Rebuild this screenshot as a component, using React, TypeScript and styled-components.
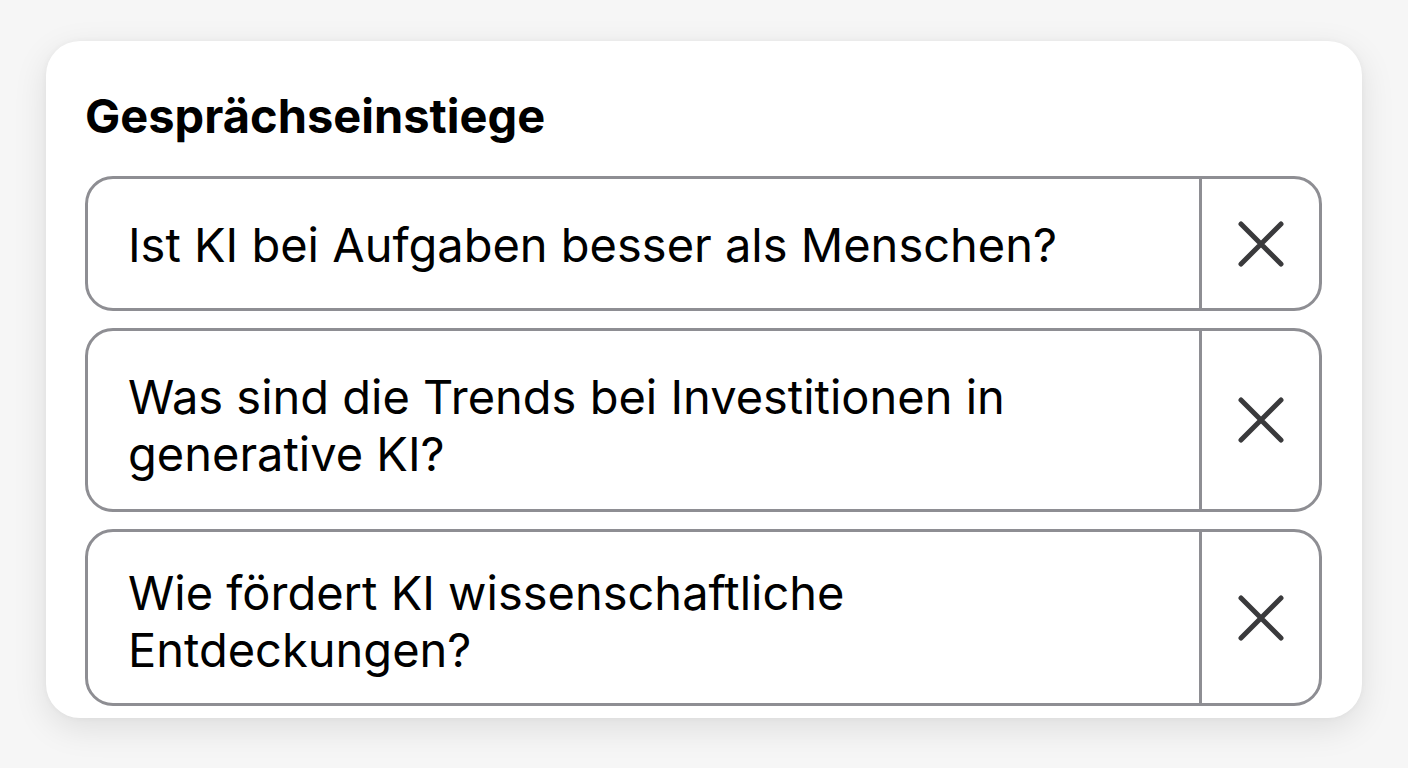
import styled, { createGlobalStyle } from "styled-components";

const GlobalStyle = createGlobalStyle`
  html, body {
    margin: 0;
    padding: 0;
    background: #f6f6f6;
  }
  body {
    font-family: Inter, "Liberation Sans", Arial, sans-serif;
  }
`;

type StarterType = {
  text: string;
  padTop: number;
  padBottom: number;
};

const starters: StarterType[] = [
  { text: "Ist KI bei Aufgaben besser als Menschen?", padTop: 37, padBottom: 35 },
  { text: "Was sind die Trends bei Investitionen in generative KI?", padTop: 37, padBottom: 27 },
  { text: "Wie fördert KI wissenschaftliche Entdeckungen?", padTop: 32, padBottom: 25 },
];

const CloseIcon = () => (
  <svg width="46" height="46" viewBox="0 0 46 46" fill="none">
    <path
      d="M3 3 L43 43 M43 3 L3 43"
      stroke="#3a3a3c"
      strokeWidth="5"
      strokeLinecap="round"
    />
  </svg>
);

const Starter = (props: StarterType) => {
  return (
    <Row>
      <RowText $padTop={props.padTop} $padBottom={props.padBottom}>
        {props.text}
      </RowText>
      <RemoveButton aria-label="Entfernen">
        <CloseIcon />
      </RemoveButton>
    </Row>
  );
};

export default function App() {
  return (
    <>
      <GlobalStyle />
      <Page>
        <Card>
          <Title>Gesprächseinstiege</Title>
          <List>
            {starters.map((s) => (
              <Starter key={s.text} {...s} />
            ))}
          </List>
        </Card>
      </Page>
    </>
  );
}

const Page = styled.div`
  width: 1408px;
  height: 768px;
  padding: 41px 46px 0;
  box-sizing: border-box;
`;

const Card = styled.div`
  width: 1316px;
  height: 677px;
  box-sizing: border-box;
  background: #ffffff;
  border-radius: 34px;
  box-shadow: 0 10px 34px rgba(0, 0, 0, 0.1), 0 0 6px rgba(0, 0, 0, 0.04);
  padding: 47px 40px 0 39px;
  overflow: hidden;
`;

const Title = styled.h2`
  margin: 0 0 32px 0;
  font-size: 47px;
  line-height: 56px;
  font-weight: 700;
  color: #000;
`;

const List = styled.div`
  display: flex;
  flex-direction: column;
  gap: 17px;
`;

const Row = styled.div`
  display: grid;
  grid-template-columns: 1fr 117px;
  border: 3px solid #8e8e93;
  border-radius: 28px;
  background: #fff;
`;

const RowText = styled.div<{ $padTop: number; $padBottom: number }>`
  padding: ${(p) => p.$padTop}px 100px ${(p) => p.$padBottom}px 40px;
  font-size: 47px;
  line-height: 57px;
  color: #000;
  border-right: 3px solid #8e8e93;
`;

const RemoveButton = styled.button`
  display: flex;
  align-items: center;
  justify-content: center;
  background: none;
  border: none;
  padding: 0;
  cursor: pointer;
`;
